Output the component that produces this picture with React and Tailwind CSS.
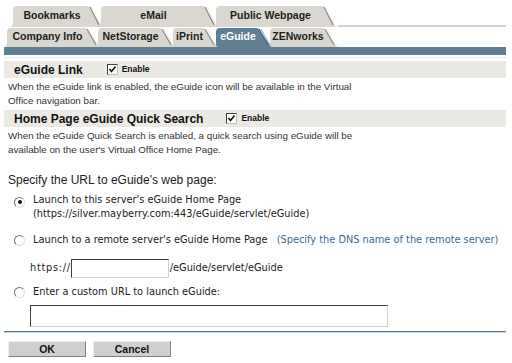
import React from 'react';

// tab outline: rounded top-left, slanted right edge
const tabPath = (w, h) =>
  `M0,${h} C2,${h} 3,${h - 2} 3,${h - 6} L3,5 Q3,1 7,1 L${w - 17},1 Q${w - 14},1 ${w - 13},4 L${w - 4},${h - 3} Q${w - 3},${h} ${w},${h} Z`;

const Tab = ({ label, w, h, active, className }) => (
  <div className={`relative flex shrink-0 items-center justify-center ${className}`} style={{ width: w, height: h }}>
    <svg className="absolute inset-0" width={w} height={h}>
      <path d={tabPath(w, h)} fill={active ? '#5f7f94' : '#d9d7cf'} />
      <path d={`M${w - 14},2 L${w - 5},${h - 2}`} stroke={active ? '#4a6678' : '#8f8d86'} strokeWidth="1.2" fill="none" />
      <path d={`M${w - 12},2 L${w - 3},${h - 2}`} stroke={active ? '#8aa2b2' : '#f2f1ec'} strokeWidth="1" fill="none" />
    </svg>
    <span className={`relative pr-[10px] text-[10.5px] font-bold ${active ? 'text-white' : 'text-[#1e1e1e]'}`}>{label}</span>
  </div>
);

const Checkbox = () => (
  <span className="inline-flex h-[11px] w-[11px] items-center justify-center border border-t-[#404040] border-l-[#404040] border-r-[#c0c0c0] border-b-[#c0c0c0] bg-white">
    <svg width="9" height="9" viewBox="0 0 9 9">
      <path d="M1.5 4 L3.5 6.5 L7.5 1.5" stroke="#111" strokeWidth="1.6" fill="none" />
    </svg>
  </span>
);

const Radio = ({ checked }) => (
  <span className="inline-flex h-[11px] w-[11px] shrink-0 items-center justify-center rounded-full border border-t-[#707070] border-l-[#707070] border-r-[#e0e0e0] border-b-[#e0e0e0] bg-white">
    {checked && <span className="h-[4px] w-[4px] rounded-full bg-[#111]"></span>}
  </span>
);

const SectionBar = ({ title, gap }) => (
  <div className="flex h-[17px] items-center bg-[#ebe9e3] pl-[10px]">
    <span className="text-[12px] font-bold text-[#111]">{title}</span>
    <span className={`flex items-center gap-[4px] ${gap}`}>
      <Checkbox />
      <span className="text-[8.5px] font-bold text-[#111]">Enable</span>
    </span>
  </div>
);

export default function App() {
  return (
    <div className="h-[363px] w-[512px] overflow-hidden bg-white font-['Liberation_Sans',Arial,sans-serif] text-[#222]">
      {/* tab rows */}
      <div className="flex items-end pl-[10px] pr-[6px] pt-[5px]">
        <Tab label="Bookmarks" w={94} h={22} className="z-[6]" />
        <Tab label="eMail" w={121} h={22} className="z-[5] -ml-[6px]" />
        <Tab label="Public Webpage" w={125} h={22} className="z-[4] -ml-[6px]" />
        <div className="h-[2px] flex-1 bg-[#d5d2ca]"></div>
      </div>
      <div className="flex items-end pl-[4px] pr-[6px]">
        <Tab label="Company Info" w={97} h={20} className="z-[6]" />
        <Tab label="NetStorage" w={81} h={20} className="z-[5] -ml-[6px]" />
        <Tab label="iPrint" w={49} h={20} className="z-[4] -ml-[6px]" />
        <Tab label="eGuide" w={60} h={20} active className="z-[3] -ml-[6px]" />
        <Tab label="ZENworks" w={72} h={20} className="z-[2] -ml-[6px]" />
      </div>

      <div className="ml-[4px] mr-[6px]">
        <div className="h-[8px] bg-[#5f7f94]"></div>
        <div className="mt-[2px] h-[1px] bg-[#ebe9e3]"></div>

        <div className="mt-[3px]">
          <SectionBar title="eGuide Link" gap="ml-[24px]" />
        </div>
        <p className="px-[4px] pt-[2px] text-[9.8px] leading-[14px] text-[#333]">
          When the eGuide link is enabled, the eGuide icon will be available in the Virtual
          <br />
          Office navigation bar.
        </p>

        <div className="mt-[2px]">
          <SectionBar title="Home Page eGuide Quick Search" gap="ml-[23px]" />
        </div>
        <p className="px-[4px] pt-[2px] text-[9.8px] leading-[14px] text-[#333]">
          When the eGuide Quick Search is enabled, a quick search using eGuide will be
          <br />
          available on the user's Virtual Office Home Page.
        </p>

        <div className="mt-[14px] px-[4px] text-[12px] text-[#222]">Specify the URL to eGuide's web page:</div>

        <div className="whitespace-nowrap font-['DejaVu_Sans',Verdana,sans-serif] text-[9.8px] text-[#222]">
          <div className="mt-[4px] flex items-start gap-[8px] pl-[10px]">
            <span className="mt-[1px]"><Radio checked /></span>
            <div className="leading-[14px]">
              <div>Launch to this server's eGuide Home Page</div>
              <div>(https://silver.mayberry.com:443/eGuide/servlet/eGuide)</div>
            </div>
          </div>

          <div className="mt-[12px] flex items-center gap-[8px] pl-[10px]">
            <Radio />
            <span>Launch to a remote server's eGuide Home Page</span>
            <span className="ml-[1px] text-[#3a6a94]">(Specify the DNS name of the remote server)</span>
          </div>

          <div className="mt-[11px] flex items-center pl-[26px]">
            <span className="tracking-[0.7px]">https://</span>
            <input className="h-[19px] w-[98px] border border-t-[#404040] border-l-[#404040] border-r-[#d0d0d0] border-b-[#d0d0d0] bg-white outline-none" />
            <span className="ml-[1px]">/eGuide/servlet/eGuide</span>
          </div>

          <div className="mt-[7px] flex items-center gap-[8px] pl-[10px]">
            <Radio />
            <span>Enter a custom URL to launch eGuide:</span>
          </div>

          <div className="mt-[6px] pl-[26px]">
            <input className="h-[22px] w-[358px] border border-t-[#404040] border-l-[#404040] border-r-[#d0d0d0] border-b-[#d0d0d0] bg-white outline-none" />
          </div>
        </div>

        <div className="mt-[4px] h-[2px] border-t border-[#5f7f94] bg-[#c6d2da]"></div>

        <div className="mt-[8px] flex gap-[7px] pl-[4px]">
          <button className="h-[16px] w-[78px] border border-t-[#f0f0f0] border-l-[#f0f0f0] border-r-[#808080] border-b-[#808080] bg-[#cfcfcf] text-[10.5px] font-bold leading-none text-[#111]">OK</button>
          <button className="h-[16px] w-[78px] border border-t-[#f0f0f0] border-l-[#f0f0f0] border-r-[#808080] border-b-[#808080] bg-[#cfcfcf] text-[10.5px] font-bold leading-none text-[#111]">Cancel</button>
        </div>
      </div>
    </div>
  );
}
